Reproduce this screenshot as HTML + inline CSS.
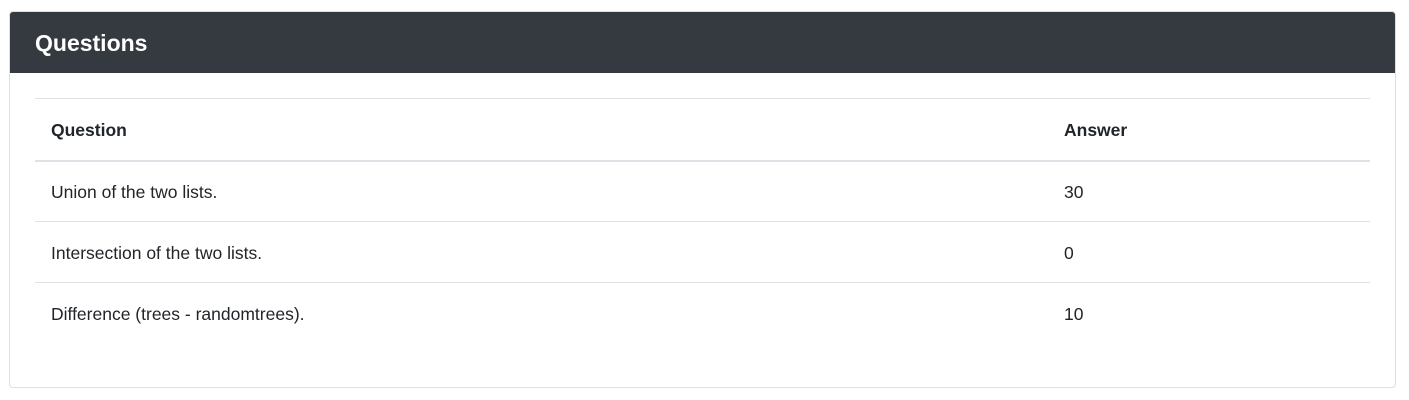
<!DOCTYPE html>
<html><head><style>
body{margin:0;background:#fff;font-family:"Liberation Sans",sans-serif;color:#212529}
.card{position:absolute;left:9px;top:11px;width:1385px;height:375px;border:1px solid #dfdfdf;border-radius:4px;overflow:hidden}
.hd{background:#343a40;color:#fff;height:61px;box-sizing:border-box;padding-left:25px;font-size:23px;font-weight:bold;line-height:62px}
table{position:absolute;left:25px;top:86px;width:1335px;border-collapse:collapse;font-size:17.5px}
td,th{text-align:left;padding:0 16px;border-top:1px solid #dee2e6;height:61px;box-sizing:border-box}
th{border-bottom:2px solid #dee2e6;height:62px;padding-top:2px}
td{padding-top:2px}
.a{width:322px}
</style></head><body>
<div class="card"><div class="hd">Questions</div>
<table>
<tr><th>Question</th><th class="a">Answer</th></tr>
<tr><td>Union of the two lists.</td><td>30</td></tr>
<tr><td>Intersection of the two lists.</td><td>0</td></tr>
<tr><td>Difference (trees - randomtrees).</td><td>10</td></tr>
</table></div>
</body></html>
